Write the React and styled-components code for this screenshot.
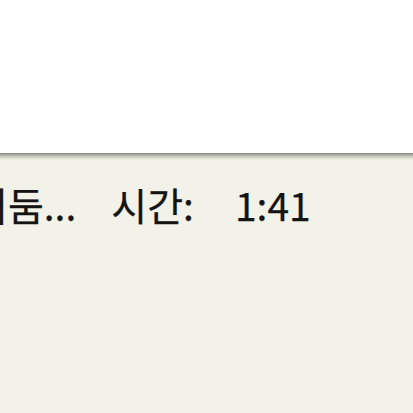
import React from "react";
import styled, { createGlobalStyle } from "styled-components";

const Global = createGlobalStyle`
  html, body { margin: 0; padding: 0; background: #ffffff; }
  body { font-family: "Noto Sans CJK KR", "Noto Sans", sans-serif; overflow: hidden; }
`;

const Page = styled.div`
  width: 413px;
  height: 413px;
  display: flex;
  flex-direction: column;
  overflow: hidden;
`;

const TopArea = styled.div`
  height: 153px;
  background: #ffffff;
  flex: none;
`;

const Panel = styled.div`
  flex: 1;
  background: #f3f2e8;
  display: flex;
  flex-direction: column;
  overflow: hidden;
`;

const Shadow = styled.div`
  height: 7px;
  flex: none;
  background: linear-gradient(#858581, #c4c3bb 45%, #f3f2e8);
`;

const Row = styled.div`
  display: flex;
  align-items: baseline;
  margin-top: 21px;
  margin-left: -28px;
  white-space: nowrap;
  font-size: 39px;
  font-weight: 400;
  line-height: 1.2;
  color: #141414;
  -webkit-text-stroke: 0.25px #141414;
`;

const Cell = styled.span`
  margin-right: ${(p) => p.$gap}px;
`;

export default function App() {
  return (
    <>
      <Global />
      <Page>
        <TopArea />
        <Panel>
          <Shadow />
          <Row>
            <Cell $gap={35}>어둠...</Cell>
            <Cell $gap={41}>시간:</Cell>
            <Cell $gap={0}>1:41</Cell>
          </Row>
        </Panel>
      </Page>
    </>
  );
}
